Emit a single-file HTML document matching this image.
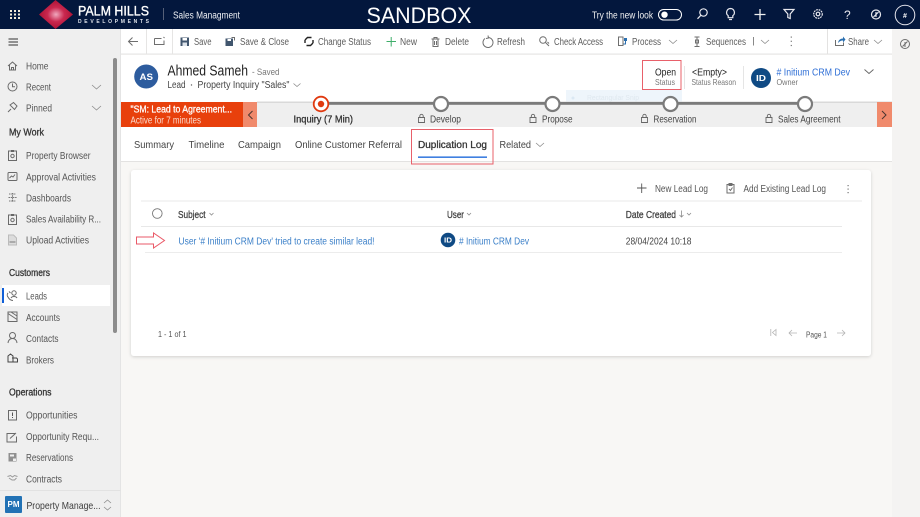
<!DOCTYPE html>
<html lang="en">
<head>
<meta charset="utf-8">
<title>Sales Managment</title>
<style>
html,body{margin:0;padding:0;width:920px;height:517px;overflow:hidden;background:#f8f7f5}
svg{display:block;font-family:"Liberation Sans",sans-serif;filter:blur(.25px)}
text{font-size:10px;fill:#4a4a4a}
.s text{font-size:10px;fill:#555}
.h text{font-size:10px;fill:#333;stroke:#333;stroke-width:.3}
.c text{font-size:10px;fill:#5c5c5c}
.i{fill:none;stroke:#6a6a6a;stroke-width:1}
.n{fill:none;stroke:#6e6e6e;stroke-width:1}
.w{fill:none;stroke:#e8e8ee;stroke-width:1.2}
.ch{fill:none;stroke:#8c8c8c;stroke-width:.8}
.g{fill:#fff;stroke:#7b7b7b;stroke-width:2.2}
.l{fill:none;stroke:#666;stroke-width:.9}
.b{stroke:#444;stroke-width:.3}
</style>
</head>
<body>
<svg width="920" height="517" viewBox="0 0 920 517" xmlns="http://www.w3.org/2000/svg">
<defs>
<radialGradient id="d" cx="50%" cy="50%" r="55%">
<stop offset="0" stop-color="#f0a8be"/><stop offset=".45" stop-color="#c9284f"/><stop offset="1" stop-color="#a80f30"/>
</radialGradient>
<filter id="sh" x="-2%" y="-5%" width="104%" height="110%"><feDropShadow dx="0" dy="1" stdDeviation="1.5" flood-color="#000" flood-opacity=".16"/></filter>
</defs>

<!-- page backgrounds -->
<rect width="920" height="517" fill="#f8f7f5"/>
<rect x="121" y="29" width="771" height="132" fill="#fff"/>
<rect x="892" y="29" width="28" height="488" fill="#f4f3f2"/>
<rect x="121" y="161" width="771" height="1" fill="#e3e2e1"/>

<!-- top bar -->
<rect width="920" height="29" fill="#03173d"/>
<g fill="#f2ead8">
<rect x="10" y="10" width="2" height="2"/><rect x="14" y="10" width="2" height="2"/><rect x="18" y="10" width="2" height="2"/>
<rect x="10" y="13.500" width="2" height="2"/><rect x="14" y="13.500" width="2" height="2"/><rect x="18" y="13.500" width="2" height="2"/>
<rect x="10" y="17" width="2" height="2"/><rect x="14" y="17" width="2" height="2"/><rect x="18" y="17" width="2" height="2"/>
</g>
<path d="M55.500 0 L73 14.500 L55.500 29 L39 14.500Z" fill="url(#d)"/>
<text x="78" y="15.500" textLength="71" lengthAdjust="spacingAndGlyphs" style="font-size:13.500px;fill:#fff;stroke:#fff;stroke-width:.35">PALM HILLS</text>
<text x="78" y="23" textLength="71" style="font-size:5px;fill:#dfe3ea;font-weight:bold">DEVELOPMENTS</text>
<rect x="163" y="8" width="1" height="12" fill="#566078"/>
<text x="173" y="18.500" textLength="67" lengthAdjust="spacingAndGlyphs" style="font-size:10px;fill:#eef0f4">Sales Managment</text>
<text x="366.500" y="23" textLength="105" lengthAdjust="spacingAndGlyphs" style="font-size:22.500px;fill:#fff">SANDBOX</text>
<text x="592" y="18.500" textLength="61" lengthAdjust="spacingAndGlyphs" style="font-size:10px;fill:#f2f2f2">Try the new look</text>
<rect x="658.500" y="9.500" width="23" height="10.500" rx="5.200" fill="none" stroke="#fff"/>
<circle cx="664.500" cy="14.700" r="3.200" fill="#fff"/>
<!-- header icons -->
<circle cx="703.500" cy="12.500" r="3.700" class="w"/><path d="M700.800 15.300 L697.500 18.800" class="w"/>
<path d="M730.500 8.500 a4 4 0 0 1 2.300 7.200 v2 h-4.600 v-2 a4 4 0 0 1 2.300-7.200Z M729 19.500h3" class="w"/>
<path d="M754.500 14.500h11 M760 9v11" stroke="#f0f0f0" stroke-width="1.300" fill="none"/>
<path d="M784 9.500h10l-3.800 4.500v4.500l-2.400-1v-3.500Z" class="w"/>
<circle cx="818" cy="14" r="4.300" class="w" stroke-dasharray="1.800 .8"/><circle cx="818" cy="14" r="1.800" class="w"/>
<text x="844" y="19" style="font-size:12px;fill:#e8e8ee">?</text>
<circle cx="876" cy="14.500" r="4.500" class="w"/><path d="M873.500 17 l5-5 M876 12v5" class="w"/>
<circle cx="905" cy="15" r="9.800" fill="none" stroke="#e6e6ee" stroke-width="1"/>
<text x="903" y="18" style="font-size:7px;fill:#fff;font-weight:bold">#</text>

<!-- command bar -->
<rect x="121" y="53.500" width="771" height="1.200" fill="#e6e5e4"/>
<rect x="146" y="29" width="1" height="25" fill="#e6e5e4"/>
<rect x="172" y="29" width="1" height="25" fill="#e6e5e4"/>
<rect x="827" y="29" width="1" height="25" fill="#e3e2e1"/>
<path d="M138 41.500h-9 M132.500 37.500l-4 4 4 4" class="n"/>
<path d="M154.500 38.500h7 M154.500 38.500v6h9.500v-4" class="n"/><path d="M163.500 37l1 1" class="n"/>
<rect x="180.500" y="37.500" width="8.500" height="8.500" fill="#41566e"/><rect x="182.500" y="38" width="4.500" height="2.500" fill="#fff"/><rect x="182.500" y="42.500" width="4.500" height="3.500" fill="#dde3ea"/>
<g class="c">
<text x="194" y="44.800" textLength="17.500" lengthAdjust="spacingAndGlyphs">Save</text>
<text x="240" y="44.800" textLength="49" lengthAdjust="spacingAndGlyphs">Save &amp; Close</text>
<text x="318" y="44.800" textLength="53" lengthAdjust="spacingAndGlyphs">Change Status</text>
<text x="400" y="44.800" textLength="17" lengthAdjust="spacingAndGlyphs">New</text>
<text x="445" y="44.800" textLength="24" lengthAdjust="spacingAndGlyphs">Delete</text>
<text x="497" y="44.800" textLength="28" lengthAdjust="spacingAndGlyphs">Refresh</text>
<text x="554" y="44.800" textLength="49" lengthAdjust="spacingAndGlyphs">Check Access</text>
<text x="632" y="44.800" textLength="29" lengthAdjust="spacingAndGlyphs">Process</text>
<text x="706" y="44.800" textLength="40" lengthAdjust="spacingAndGlyphs">Sequences</text>
<text x="848" y="44.800" textLength="21" lengthAdjust="spacingAndGlyphs">Share</text>
</g>
<rect x="225.500" y="38.500" width="7.500" height="7.500" fill="#41566e"/><rect x="227.500" y="39" width="3.500" height="2" fill="#fff"/><path d="M231.500 37.500h3v3" class="n"/>
<path d="M305 40 l2.500-2.500h4 M313 43 l-2.500 2.500h-4 M305 40v3 M313 40v3" fill="none" stroke="#222" stroke-width="1.400"/>
<path d="M386.500 41.500h9.500 M391.200 37v9.500" stroke="#3fae6a" stroke-width="1" fill="none"/>
<path d="M431.500 39h8 M433 39v7.500h5V39 M434 39v-1.500h3V39 M434.500 41v4 M436.500 41v4" class="n"/>
<path d="M485 38.500 a5 5 0 1 0 3-1 M488 35.500 l0.500 2.500 -2.500 0.500" class="n"/>
<circle cx="543" cy="40" r="3.300" class="n"/><path d="M545.500 42.500l3.500 3.500M547.500 42l1.500 1.500" class="n"/>
<rect x="618.500" y="37" width="4.500" height="8.500" class="n"/><rect x="624" y="38" width="3" height="3" fill="#2a6fb0"/><path d="M625.500 41v3h-2" stroke="#2a6fb0" fill="none"/>
<path d="M669 40l4 3.500 4-3.500" class="ch"/>
<path d="M694.500 37h5 M694.500 46.500h5 M697 37v9.500 M695.500 40h3 v3h-3z" class="n"/>
<rect x="753" y="37" width="1" height="8.500" fill="#888"/>
<path d="M761 40l4 3.500 4-3.500" class="ch"/>
<g fill="#777"><rect x="790.700" y="36.500" width="1.200" height="1.200"/><rect x="790.700" y="40.700" width="1.200" height="1.200"/><rect x="790.700" y="44.900" width="1.200" height="1.200"/></g>
<path d="M835.500 40v5.500h8v-3" class="n"/><path d="M838 43c.4-3 2.500-4.500 5-4.500v-2l2.500 3-2.500 3v-2c-2 0-3.500.7-5 2.500Z" fill="#2a6fb0"/>
<path d="M874 40l4 3.500 4-3.500" class="ch"/>
<circle cx="905" cy="44" r="4.500" class="n"/><path d="M902.500 46.500l5-5M905 42v5" class="n"/>

<!-- sidebar -->
<rect x="0" y="29" width="121" height="488" fill="#efefef"/>
<rect x="120" y="29" width="1" height="488" fill="#e4e4e4"/>
<rect x="113" y="58" width="4" height="275" rx="2" fill="#8c8c8c"/>
<path d="M8.500 39h9.500 M8.500 42h9.500 M8.500 45h9.500" stroke="#333" stroke-width="1"/>
<rect x="2" y="285" width="108" height="21" fill="#fff"/>
<rect x="2" y="288" width="2" height="15" fill="#1160d8"/>
<g class="s">
<text x="26" y="69.300" textLength="22.500" lengthAdjust="spacingAndGlyphs">Home</text>
<text x="26" y="90.300" textLength="25" lengthAdjust="spacingAndGlyphs">Recent</text>
<text x="26" y="111.300" textLength="26" lengthAdjust="spacingAndGlyphs">Pinned</text>
<text x="26" y="158.800" textLength="64.500" lengthAdjust="spacingAndGlyphs">Property Browser</text>
<text x="26" y="180.300" textLength="70" lengthAdjust="spacingAndGlyphs">Approval Activities</text>
<text x="26" y="201.300" textLength="45" lengthAdjust="spacingAndGlyphs">Dashboards</text>
<text x="26" y="222.300" textLength="75" lengthAdjust="spacingAndGlyphs">Sales Availability R...</text>
<text x="26" y="243.300" textLength="63" lengthAdjust="spacingAndGlyphs">Upload Activities</text>
<text x="26" y="299.300" textLength="21" lengthAdjust="spacingAndGlyphs">Leads</text>
<text x="26" y="320.800" textLength="34" lengthAdjust="spacingAndGlyphs">Accounts</text>
<text x="26" y="341.800" textLength="32.500" lengthAdjust="spacingAndGlyphs">Contacts</text>
<text x="26" y="363.300" textLength="28" lengthAdjust="spacingAndGlyphs">Brokers</text>
<text x="26" y="418.300" textLength="51.500" lengthAdjust="spacingAndGlyphs">Opportunities</text>
<text x="26" y="439.800" textLength="73" lengthAdjust="spacingAndGlyphs">Opportunity Requ...</text>
<text x="26" y="460.800" textLength="47" lengthAdjust="spacingAndGlyphs">Reservations</text>
<text x="26" y="482.300" textLength="36" lengthAdjust="spacingAndGlyphs">Contracts</text>
</g>
<g class="h">
<text x="9" y="135.300" textLength="35" lengthAdjust="spacingAndGlyphs">My Work</text>
<text x="9" y="275.800" textLength="41" lengthAdjust="spacingAndGlyphs">Customers</text>
<text x="9" y="395.300" textLength="42.500" lengthAdjust="spacingAndGlyphs">Operations</text>
</g>
<!-- sidebar icons -->
<path d="M8 66l4.500-4 4.500 4 M9.500 65v5h6v-5 M11.500 70v-2.500h2V70" class="i"/>
<circle cx="12.500" cy="86.500" r="4.500" class="i"/><path d="M12.500 83.500v3.300h2.500" class="i"/>
<path d="M92 85l4.500 4 4.500-4" class="ch"/><path d="M92 106l4.500 4 4.500-4" class="ch"/>
<path d="M8 112l3-3 M10 105l3.500-2.500 3.500 3.500-2.500 3.500Z" class="i"/>
<rect x="8.500" y="151" width="8" height="9.500" class="i"/><rect x="11" y="150" width="3" height="2" fill="#666"/><circle cx="12.500" cy="156" r="1.700" class="i"/>
<rect x="8" y="172.500" width="9" height="8" rx="1" class="i"/><path d="M9.500 178l2-2 1.500 1 2-2.500" class="i"/>
<path d="M9 194h7 M8.500 197.500h8.500 M9 201h7 M12.500 193v9" stroke="#777" stroke-width="1.100" stroke-dasharray="1.500 .7" fill="none"/>
<rect x="8.500" y="215" width="8" height="9.500" class="i"/><rect x="11" y="214" width="3" height="2" fill="#666"/><circle cx="12.500" cy="220" r="1.700" class="i"/>
<path d="M8.500 235h5l3 3v7h-8Z" fill="#dcdcdc" stroke="#bbb"/><rect x="9.500" y="241" width="6" height="2" fill="#aaa"/>
<path d="M8 293a3 3 0 0 0 0 4c1 2 3 3.500 5 3.500 M9 291.500l1.500 1.500" class="i"/><circle cx="14" cy="293" r="2.200" class="i"/><path d="M11 298c1-2 5-2 6 0" class="i"/>
<rect x="8" y="312" width="9" height="9.500" class="i"/><path d="M8 313.500l9 6 M11 312l6 4" class="i"/>
<circle cx="12.500" cy="335.500" r="3" class="i"/><path d="M8 343c.5-3.500 2.500-4.500 4.500-4.500s4 1 4.500 4.500" class="i"/>
<path d="M8 356l2.500-2 2.500 2v6h-5Z M12 358h4.500l1 1v3h-5" stroke="#444" stroke-width="1" fill="none"/>
<rect x="8.500" y="410.500" width="8" height="9.500" class="i"/><rect x="12" y="412.500" width="1" height="3.500" fill="#555"/><rect x="12" y="417" width="1" height="1" fill="#555"/>
<path d="M15 433.500h-8v8.500h9.500v-5.500 M10 438.500l6-5.500" class="i"/>
<rect x="8.500" y="453" width="8" height="8.500" fill="#8f8f8f"/><rect x="10" y="454.500" width="4" height="2" fill="#efefef"/><rect x="13" y="458.500" width="3" height="2.500" fill="#efefef"/>
<path d="M7.500 476.500l3-1 2 1.500 2-1.500 3 1 M9 478l3 2 2.500 0 2-2" stroke="#999" stroke-width="1" fill="none"/>
<rect x="0" y="490" width="121" height="1" fill="#e2e2e2"/>
<rect x="5" y="496" width="17" height="17" rx="1" fill="#2272b5"/>
<text x="7.500" y="507" textLength="12" lengthAdjust="spacingAndGlyphs" style="font-size:8px;fill:#fff;font-weight:bold">PM</text>
<text x="26.500" y="508.800" textLength="74" lengthAdjust="spacingAndGlyphs" style="font-size:10.500px;fill:#3d3d3d">Property Manage...</text>
<path d="M104 503l3.500-3 3.500 3 M104 507l3.500 3 3.500-3" class="ch"/>

<!-- record header -->
<circle cx="146.200" cy="76.500" r="12" fill="#2d5c9e"/>
<text x="139.500" y="80" textLength="13.500" lengthAdjust="spacingAndGlyphs" style="font-size:9.500px;fill:#fff;font-weight:bold">AS</text>
<text x="167.500" y="75.300" textLength="80.500" lengthAdjust="spacingAndGlyphs" style="font-size:15px;fill:#1f1f1f">Ahmed Sameh</text>
<text x="252" y="75" textLength="27.500" lengthAdjust="spacingAndGlyphs" style="font-size:9.500px;fill:#777">- Saved</text>
<text x="167.500" y="88" textLength="18" lengthAdjust="spacingAndGlyphs" style="fill:#444">Lead</text>
<circle cx="191.500" cy="85" r=".7" fill="#666"/>
<text x="197.500" y="88" textLength="92" lengthAdjust="spacingAndGlyphs" style="fill:#444">Property Inquiry "Sales"</text>
<path d="M293.500 83.500l3.500 3 3.500-3" class="ch"/>
<rect x="642.500" y="60.500" width="38.500" height="29" fill="none" stroke="#e8606a" stroke-width="1"/>
<text x="655" y="75.300" textLength="21" lengthAdjust="spacingAndGlyphs" style="fill:#222">Open</text>
<text x="655" y="85" textLength="20" lengthAdjust="spacingAndGlyphs" style="font-size:8.500px;fill:#777">Status</text>
<rect x="684" y="66" width="1" height="23" fill="#e5e5e5"/>
<text x="692" y="75.300" textLength="35" lengthAdjust="spacingAndGlyphs" style="fill:#222">&lt;Empty&gt;</text>
<text x="691.500" y="85" textLength="44.500" lengthAdjust="spacingAndGlyphs" style="font-size:8.500px;fill:#777">Status Reason</text>
<rect x="743" y="66" width="1" height="23" fill="#e5e5e5"/>
<circle cx="761" cy="78" r="10" fill="#0f4a84"/>
<text x="756" y="81" textLength="10" lengthAdjust="spacingAndGlyphs" style="font-size:8.500px;fill:#fff;font-weight:bold">ID</text>
<text x="776.500" y="75.300" textLength="73.500" lengthAdjust="spacingAndGlyphs" style="fill:#2f6fd6" class="bl">#&#160;Initium CRM Dev</text>
<text x="776.500" y="85" textLength="21.500" lengthAdjust="spacingAndGlyphs" style="font-size:8.500px;fill:#777">Owner</text>
<path d="M864.500 69.500l4.500 4 4.500-4" fill="none" stroke="#666" stroke-width=".9"/>

<!-- snip ghost -->
<rect x="566" y="90" width="116" height="12" fill="#eef5fb"/>
<circle cx="573" cy="98" r="1.500" fill="#dbe8f3"/>
<text x="587" y="100" textLength="52" lengthAdjust="spacingAndGlyphs" style="font-size:7.500px;fill:#dfe8ef">Rectangular Snip</text>

<!-- business process flow -->
<rect x="121" y="102" width="771" height="25" fill="#efefef"/>
<rect x="257" y="101.500" width="635" height="1.500" fill="#d9d9d9"/>
<rect x="321" y="102" width="484" height="2.800" fill="#7b7b7b"/>
<rect x="121" y="102" width="122" height="25" fill="#e8400c"/>
<rect x="243" y="102" width="14" height="25" fill="#f08a6c"/>
<rect x="877" y="102" width="15" height="25" fill="#f08a6c"/>
<path d="M252.500 111l-4 4 4 4" fill="none" stroke="#4a3530" stroke-width="1"/>
<path d="M882 111l4 4-4 4" fill="none" stroke="#4a3530" stroke-width="1"/>
<text x="130.500" y="112.300" textLength="101.500" lengthAdjust="spacingAndGlyphs" style="fill:#fff;stroke:#fff;stroke-width:.3">"SM: Lead to Agreement...</text>
<text x="130.500" y="123.300" textLength="70.500" lengthAdjust="spacingAndGlyphs" style="fill:#fbdccf">Active for 7 minutes</text>
<circle cx="321" cy="104" r="7.300" fill="#fff" stroke="#e03a10" stroke-width="1.800"/>
<circle cx="321" cy="104" r="3.200" fill="#e03a10"/>
<circle cx="441" cy="104" r="7" class="g"/>
<circle cx="552.500" cy="104" r="7" class="g"/>
<circle cx="670.500" cy="104" r="7" class="g"/>
<circle cx="805" cy="104" r="7" class="g"/>
<text x="293.500" y="122.300" textLength="59.500" lengthAdjust="spacingAndGlyphs" style="fill:#333;stroke:#333;stroke-width:.3">Inquiry  (7 Min)</text>
<text x="430" y="122.300" textLength="31" lengthAdjust="spacingAndGlyphs" style="fill:#444">Develop</text>
<text x="542" y="122.300" textLength="30.500" lengthAdjust="spacingAndGlyphs" style="fill:#444">Propose</text>
<text x="653.500" y="122.300" textLength="43" lengthAdjust="spacingAndGlyphs" style="fill:#444">Reservation</text>
<text x="778" y="122.300" textLength="62.500" lengthAdjust="spacingAndGlyphs" style="fill:#444">Sales Agreement</text>
<g class="l">
<path d="M418.500 117.500h6v5h-6Z M419.800 117.500v-1.500a1.700 1.700 0 0 1 3.400 0v1.500"/>
<path d="M530 117.500h6v5h-6Z M531.300 117.500v-1.500a1.700 1.700 0 0 1 3.400 0v1.500"/>
<path d="M641.500 117.500h6v5h-6Z M642.800 117.500v-1.500a1.700 1.700 0 0 1 3.400 0v1.500"/>
<path d="M766 117.500h6v5h-6Z M767.300 117.500v-1.500a1.700 1.700 0 0 1 3.400 0v1.500"/>
</g>

<!-- tabs -->
<text x="134" y="147.800" textLength="40" lengthAdjust="spacingAndGlyphs" style="font-size:10.500px;fill:#444">Summary</text>
<text x="188.500" y="147.800" textLength="36" lengthAdjust="spacingAndGlyphs" style="font-size:10.500px;fill:#444">Timeline</text>
<text x="238" y="147.800" textLength="43" lengthAdjust="spacingAndGlyphs" style="font-size:10.500px;fill:#444">Campaign</text>
<text x="295" y="147.800" textLength="107" lengthAdjust="spacingAndGlyphs" style="font-size:10.500px;fill:#444">Online Customer Referral</text>
<text x="418" y="147.800" textLength="69" lengthAdjust="spacingAndGlyphs" style="font-size:10.500px;fill:#333;stroke:#333;stroke-width:.3">Duplication Log</text>
<text x="499.500" y="147.800" textLength="31.500" lengthAdjust="spacingAndGlyphs" style="font-size:10.500px;fill:#444">Related</text>
<rect x="418" y="156.500" width="69" height="1.300" fill="#1160d8"/>
<rect x="411.500" y="129.500" width="81.500" height="34.500" fill="none" stroke="#e8606a" stroke-width="1"/>
<path d="M536 143l4 3.500 4-3.500" class="ch"/>

<!-- card -->
<rect x="131" y="170" width="740" height="186" rx="3" fill="#fff" filter="url(#sh)"/>
<path d="M637 188h9.500 M641.700 183.500v9.500" stroke="#555" stroke-width=".9" fill="none"/>
<text x="655" y="191.800" textLength="53" lengthAdjust="spacingAndGlyphs" style="fill:#555">New Lead Log</text>
<path d="M727 184.500h7v8.500h-7Z M729 183.500h3v2h-3Z M729 189l1.500 1.500 2-3" class="n"/>
<text x="743.500" y="191.800" textLength="82.500" lengthAdjust="spacingAndGlyphs" style="fill:#555">Add Existing Lead Log</text>
<g fill="#777"><rect x="847.500" y="185" width="1.200" height="1.200"/><rect x="847.500" y="188.500" width="1.200" height="1.200"/><rect x="847.500" y="192" width="1.200" height="1.200"/></g>
<rect x="141" y="200.500" width="721" height="1" fill="#e8e8e8"/>
<circle cx="157.300" cy="213.500" r="4.800" fill="none" stroke="#777" stroke-width=".9"/>
<text x="178" y="217.800" textLength="27.500" lengthAdjust="spacingAndGlyphs" class="b" style="fill:#444">Subject</text>
<path d="M209.500 213l2 2 2-2" class="ch"/>
<text x="447" y="217.800" textLength="17" lengthAdjust="spacingAndGlyphs" class="b" style="fill:#444">User</text>
<path d="M467 213l2 2 2-2" class="ch"/>
<text x="625.800" y="217.800" textLength="50.200" lengthAdjust="spacingAndGlyphs" class="b" style="fill:#444">Date Created</text>
<path d="M681.500 210.500v6.500 M679.500 215l2 2 2-2" class="ch"/>
<path d="M687 213l2 2 2-2" class="ch"/>
<rect x="141" y="226" width="701" height="1" fill="#e8e8e8"/>
<path d="M136.500 237h17v-4l11 7.500-11 7.500v-4h-17Z" fill="#fff" stroke="#ea5a68" stroke-width="1"/>
<text x="178.500" y="244.300" textLength="196" lengthAdjust="spacingAndGlyphs" style="fill:#3a7fc8">User '#&#160;Initium CRM Dev' tried to create similar lead!</text>
<circle cx="448" cy="240" r="7.300" fill="#0f4a84"/>
<text x="444" y="242.500" textLength="8" lengthAdjust="spacingAndGlyphs" style="font-size:7px;fill:#fff;font-weight:bold">ID</text>
<text x="459" y="244.300" textLength="70" lengthAdjust="spacingAndGlyphs" style="fill:#3a7fc8">#&#160;Initium CRM Dev</text>
<text x="625.800" y="244.300" textLength="65.700" lengthAdjust="spacingAndGlyphs" style="fill:#444">28/04/2024 10:18</text>
<rect x="145" y="252" width="697" height="1" fill="#ececec"/>
<text x="158" y="337" textLength="28.500" lengthAdjust="spacingAndGlyphs" style="font-size:8px;fill:#555">1 - 1 of 1</text>
<text x="806" y="337.500" textLength="21" lengthAdjust="spacingAndGlyphs" style="font-size:8px;fill:#555">Page 1</text>
<path d="M770.800 329v7 M776 329.500l-3.500 3 3.500 3Z" fill="none" stroke="#b5b5b5" stroke-width=".8"/>
<path d="M797 333h-8 M792 330l-3 3 3 3" fill="none" stroke="#b5b5b5" stroke-width=".8"/>
<path d="M837 333h8 M842 330l3 3-3 3" fill="none" stroke="#b5b5b5" stroke-width=".8"/>
</svg>
</body>
</html>
